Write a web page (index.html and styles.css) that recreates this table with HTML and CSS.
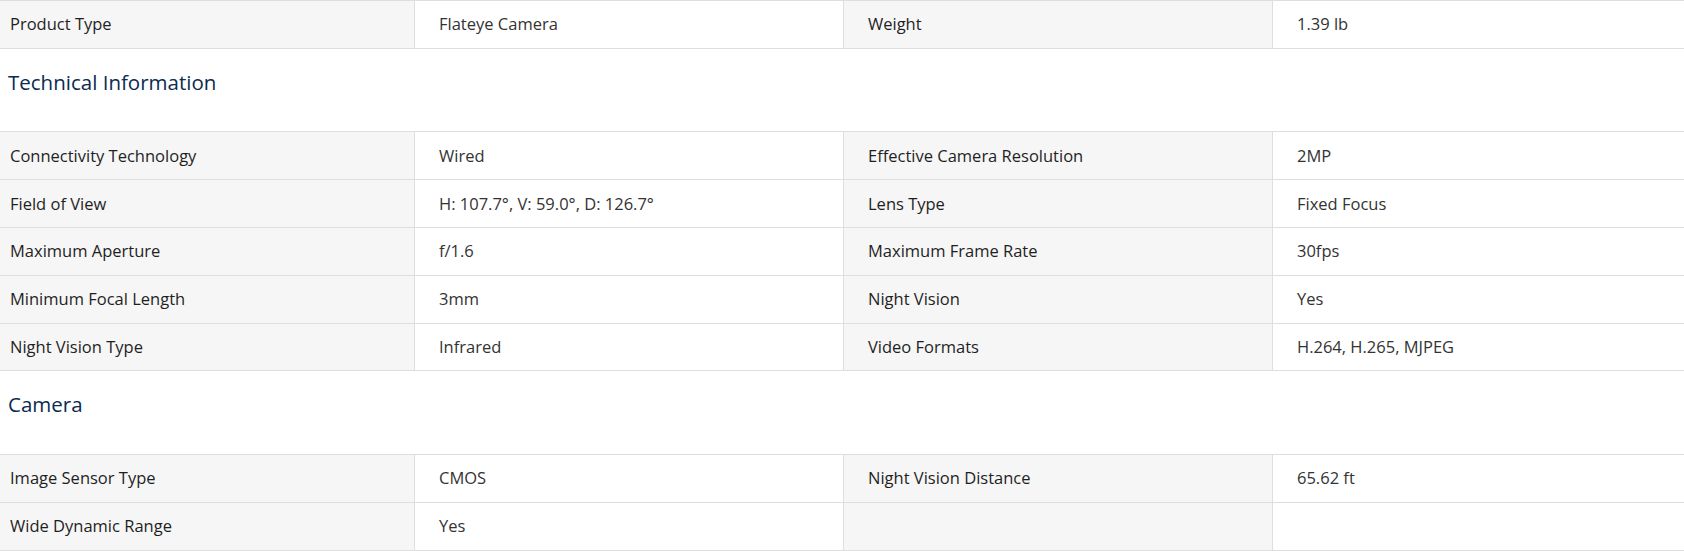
FILE: index.html
```html
<!DOCTYPE html>
<html lang="en">
<head>
<meta charset="utf-8">
<title>Specifications</title>
<link rel="stylesheet" href="styles.css">
</head>
<body>
<div class="specs">
  <div class="spec-table">
    <div class="row">
      <div class="cell label">Product Type</div>
      <div class="cell value">Flateye Camera</div>
      <div class="cell label">Weight</div>
      <div class="cell value">1.39 lb</div>
    </div>
  </div>

  <h3 class="section-title">Technical Information</h3>
  <div class="spec-table">
    <div class="row">
      <div class="cell label">Connectivity Technology</div>
      <div class="cell value">Wired</div>
      <div class="cell label">Effective Camera Resolution</div>
      <div class="cell value">2MP</div>
    </div>
    <div class="row">
      <div class="cell label">Field of View</div>
      <div class="cell value">H: 107.7°, V: 59.0°, D: 126.7°</div>
      <div class="cell label">Lens Type</div>
      <div class="cell value">Fixed Focus</div>
    </div>
    <div class="row">
      <div class="cell label">Maximum Aperture</div>
      <div class="cell value">f/1.6</div>
      <div class="cell label">Maximum Frame Rate</div>
      <div class="cell value">30fps</div>
    </div>
    <div class="row">
      <div class="cell label">Minimum Focal Length</div>
      <div class="cell value">3mm</div>
      <div class="cell label">Night Vision</div>
      <div class="cell value">Yes</div>
    </div>
    <div class="row">
      <div class="cell label">Night Vision Type</div>
      <div class="cell value">Infrared</div>
      <div class="cell label">Video Formats</div>
      <div class="cell value">H.264, H.265, MJPEG</div>
    </div>
  </div>

  <h3 class="section-title">Camera</h3>
  <div class="spec-table">
    <div class="row">
      <div class="cell label">Image Sensor Type</div>
      <div class="cell value">CMOS</div>
      <div class="cell label">Night Vision Distance</div>
      <div class="cell value">65.62 ft</div>
    </div>
    <div class="row">
      <div class="cell label">Wide Dynamic Range</div>
      <div class="cell value">Yes</div>
      <div class="cell label"></div>
      <div class="cell value"></div>
    </div>
  </div>
</div>
</body>
</html>
```

FILE: styles.css
```css
html, body {
  margin: 0;
  padding: 0;
  background: #ffffff;
}

body {
  font-family: "Open Sans", "Noto Sans", "Liberation Sans", sans-serif;
  font-size: 16.5px;
  color: #2b2b2b;
}

.spec-table {
  border-top: 1px solid #dedede;
}

.row {
  display: grid;
  grid-template-columns: 414px 429px 429px 1fr;
  border-bottom: 1px solid #dedede;
}

.cell {
  height: 46.8px;
  display: flex;
  align-items: center;
  padding-left: 24px;
  box-sizing: border-box;
  border-left: 1px solid #dedede;
  line-height: 20px;
}

.row .cell:first-child {
  border-left: none;
  padding-left: 10px;
}

.label {
  background: #f6f6f6;
  color: #1f1f1f;
}

.value {
  background: #ffffff;
  color: #333333;
}

.section-title {
  margin: 0;
  height: 82.6px;
  box-sizing: border-box;
  padding: 20px 0 0 8px;
  font-size: 20.5px;
  line-height: 26px;
  font-weight: 400;
  color: #0b2b50;
}
```
